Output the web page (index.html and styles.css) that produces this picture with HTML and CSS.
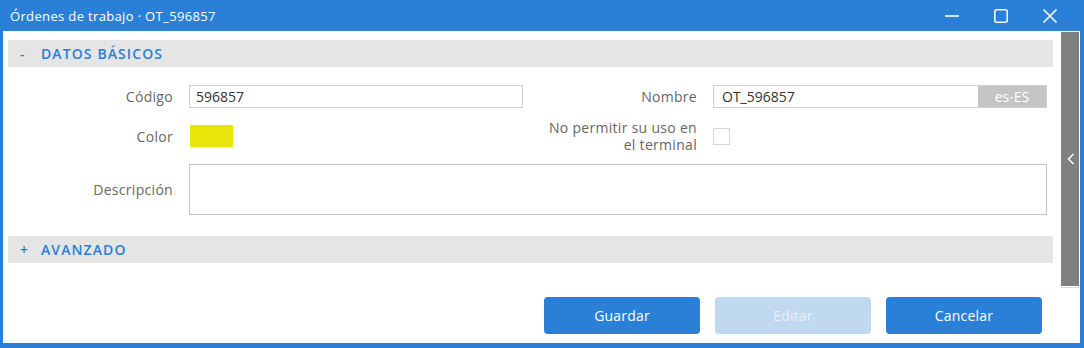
FILE: index.html
```html
<!DOCTYPE html>
<html lang="es">
<head>
<meta charset="utf-8">
<link rel="stylesheet" href="styles.css">
</head>
<body>
<div class="window">
  <div class="titlebar">
    <span class="title">Órdenes de trabajo · OT_596857</span>
    <div class="controls">
      <span class="ctl">
        <svg width="16" height="16" viewBox="0 0 16 16"><path d="M1 8h14" stroke="#fff" stroke-width="1.6" fill="none"/></svg>
      </span>
      <span class="ctl">
        <svg width="16" height="16" viewBox="0 0 16 16"><rect x="1.8" y="1.8" width="12.4" height="12.4" rx="2" stroke="#fff" stroke-width="1.5" fill="none"/></svg>
      </span>
      <span class="ctl">
        <svg width="16" height="16" viewBox="0 0 16 16"><path d="M1.5 1.5l13 13M14.5 1.5l-13 13" stroke="#fff" stroke-width="1.6" fill="none"/></svg>
      </span>
    </div>
  </div>
  <div class="body">
    <div class="content">
      <div class="section-head"><span class="sign">-</span><span>DATOS BÁSICOS</span></div>
      <div class="form">
        <label class="lbl">Código</label>
        <div class="input">596857</div>
        <label class="lbl">Nombre</label>
        <div class="input lang-input"><span class="val">OT_596857</span><span class="lang">es-ES</span></div>

        <label class="lbl">Color</label>
        <div class="cell"><span class="swatch"></span></div>
        <label class="lbl two">No permitir su uso en<br>el terminal</label>
        <div class="cell"><span class="check"></span></div>

        <label class="lbl">Descripción</label>
        <div class="textarea"></div>
      </div>
      <div class="section-head adv"><span class="sign">+</span><span>AVANZADO</span></div>
      <div class="actions">
        <button class="btn">Guardar</button>
        <button class="btn disabled">Editar</button>
        <button class="btn">Cancelar</button>
      </div>
    </div>
    <div class="side">
      <div class="scroll">
        <svg width="8" height="12" viewBox="0 0 8 12"><path d="M6.5 1L1.5 6l5 5" stroke="#fff" stroke-width="1.5" fill="none"/></svg>
      </div>
      <div class="scroll-line"></div>
    </div>
  </div>
</div>
</body>
</html>
```

FILE: styles.css
```css
* { box-sizing: border-box; }
html, body { margin: 0; padding: 0; }
body {
  width: 1084px;
  height: 348px;
  font-family: "Open Sans", "Noto Sans", sans-serif;
  background: #fff;
  overflow: hidden;
}
.window {
  width: 1084px;
  height: 348px;
  background: #2a7fd6;
  padding: 0 4px 5px 3px;
  display: flex;
  flex-direction: column;
}
.titlebar {
  height: 31px;
  flex: none;
  display: flex;
  align-items: center;
  justify-content: space-between;
  padding-left: 7px;
  color: #fff;
}
.title { font-size: 13px; letter-spacing: 0.35px; }
.controls { display: flex; align-items: center; gap: 0; margin-right: 6px; }
.ctl {
  width: 49px;
  height: 31px;
  display: flex;
  align-items: center;
  justify-content: center;
}
.body {
  flex: 1;
  background: #fff;
  display: flex;
}
.content {
  flex: 1;
  padding: 9px 8px 0 5px;
  display: flex;
  flex-direction: column;
}
.section-head {
  height: 27px;
  background: #e5e5e5;
  display: flex;
  align-items: center;
  color: #2a7fd6;
  font-size: 14px;
  font-weight: 600;
  letter-spacing: 1.1px;
}
.section-head .sign { width: 33px; padding-left: 12px; }
.form {
  margin-top: 18px;
  display: grid;
  grid-template-columns: 181px 334px 190px 334px;
  grid-template-rows: 23px 32px 51px;
  row-gap: 12px;
  align-items: center;
}
.lbl {
  text-align: right;
  padding-right: 16px;
  font-size: 14px;
  letter-spacing: 0.3px;
  color: #666;
  line-height: 17px;
}
.input {
  height: 23px;
  border: 1px solid #cfcfcf;
  font-size: 14px;
  color: #333;
  display: flex;
  align-items: center;
  padding-left: 6px;
}
.lang-input { padding-left: 0; }
.lang-input .val { flex: 1; padding-left: 8px; }
.lang {
  width: 68px;
  height: 100%;
  background: #c4c4c4;
  color: #fff;
  display: flex;
  align-items: center;
  justify-content: center;
}
.cell { display: flex; align-items: center; height: 100%; }
.swatch {
  width: 43px;
  height: 22px;
  margin-left: 1px;
  background: #ebe60a;
}
.check {
  width: 17px;
  height: 17px;
  border: 1px solid #d4d4d4;
  margin-top: 1px;
}
.textarea {
  grid-column: 2 / 5;
  height: 51px;
  border: 1px solid #c4c4c4;
}
.section-head.adv { margin-top: 21px; }
.actions {
  margin-top: 34px;
  display: flex;
  justify-content: flex-end;
  gap: 15px;
  padding-right: 11px;
}
.btn {
  width: 156px;
  height: 37px;
  border: none;
  border-radius: 4px;
  background: #2a7fd6;
  color: #fff;
  font-family: inherit;
  font-size: 14px;
  letter-spacing: 0.2px;
}
.btn.disabled { background: #c0d9f1; color: #e9f0f7; }
.side {
  width: 19px;
  flex: none;
  padding: 1px 1px 0 0;
}
.scroll {
  height: 254px;
  background: #808080;
  display: flex;
  align-items: center;
  justify-content: center;
  padding-left: 2px;
}
.scroll-line {
  margin-top: 1px;
  height: 1px;
  background: #d8d8d8;
}
```
